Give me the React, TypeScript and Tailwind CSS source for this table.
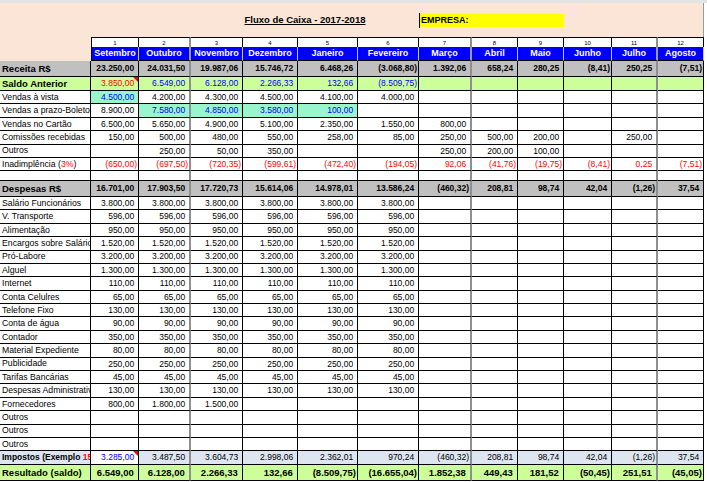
import type { ReactNode } from 'react';

const GRID =
  'grid grid-cols-[91px_48px_52px_52px_55px_60px_61px_53px_46px_46px_48px_46px_46px] w-[704px]';

const MONTHS = [
  'Setembro', 'Outubro', 'Novembro', 'Dezembro', 'Janeiro', 'Fevereiro',
  'Março', 'Abril', 'Maio', 'Junho', 'Julho', 'Agosto',
];

// gray double lines after Outubro, Março and Julho
const vline = (i: number) =>
  i === 1 || i === 6 || i === 10 ? 'border-r-2 border-r-[#8f8f8f]' : 'border-r border-r-black';

type Kind = 'receita' | 'saldo' | 'item' | 'empty' | 'despesas' | 'impostos' | 'resultado';

type Row = {
  label: ReactNode;
  kind: Kind;
  vals: string[];
  mint?: number[];
  red?: boolean;
  note?: number;
};

const six = (v: string) => [v, v, v, v, v, v];

const rows: Row[] = [
  {
    label: 'Receita R$',
    kind: 'receita',
    vals: ['23.250,00', '24.031,50', '19.987,06', '15.746,72', '6.468,26', '(3.068,80)', '1.392,06', '658,24', '280,25', '(8,41)', '250,25', '(7,51)'],
  },
  {
    label: 'Saldo Anterior',
    kind: 'saldo',
    vals: ['3.850,00', '6.549,00', '6.128,00', '2.266,33', '132,66', '(8.509,75)'],
    note: 0,
  },
  { label: 'Vendas à vista', kind: 'item', vals: ['4.500,00', '4.200,00', '4.300,00', '4.500,00', '4.100,00', '4.000,00'], mint: [0] },
  { label: 'Vendas a prazo-Boleto', kind: 'item', vals: ['8.900,00', '7.580,00', '4.850,00', '3.580,00', '100,00'], mint: [1, 2, 3, 4] },
  { label: 'Vendas no Cartão', kind: 'item', vals: ['6.500,00', '5.650,00', '4.900,00', '5.100,00', '2.350,00', '1.550,00', '800,00'] },
  { label: 'Comissões recebidas', kind: 'item', vals: ['150,00', '500,00', '480,00', '550,00', '258,00', '85,00', '250,00', '500,00', '200,00', '', '250,00'] },
  { label: 'Outros', kind: 'item', vals: ['', '250,00', '50,00', '350,00', '', '', '250,00', '200,00', '100,00'] },
  {
    label: (
      <span>
        Inadimplência (<span className="text-[#ff0000]">3%</span>)
      </span>
    ),
    kind: 'item',
    red: true,
    vals: ['(650,00)', '(697,50)', '(720,35)', '(599,61)', '(472,40)', '(194,05)', '92,06', '(41,76)', '(19,75)', '(8,41)', '0,25', '(7,51)'],
  },
  { label: '', kind: 'empty', vals: [] },
  {
    label: 'Despesas R$',
    kind: 'despesas',
    vals: ['16.701,00', '17.903,50', '17.720,73', '15.614,06', '14.978,01', '13.586,24', '(460,32)', '208,81', '98,74', '42,04', '(1,26)', '37,54'],
  },
  { label: 'Salário Funcionários', kind: 'item', vals: six('3.800,00') },
  { label: 'V. Transporte', kind: 'item', vals: six('596,00') },
  { label: 'Alimentação', kind: 'item', vals: six('950,00') },
  { label: 'Encargos sobre Salário', kind: 'item', vals: six('1.520,00') },
  { label: 'Pró-Labore', kind: 'item', vals: six('3.200,00') },
  { label: 'Alguel', kind: 'item', vals: six('1.300,00') },
  { label: 'Internet', kind: 'item', vals: six('110,00') },
  { label: 'Conta Celulres', kind: 'item', vals: six('65,00') },
  { label: 'Telefone Fixo', kind: 'item', vals: six('130,00') },
  { label: 'Conta de água', kind: 'item', vals: six('90,00') },
  { label: 'Contador', kind: 'item', vals: six('350,00') },
  { label: 'Material Expediente', kind: 'item', vals: six('80,00') },
  { label: 'Publicidade', kind: 'item', vals: six('250,00') },
  { label: 'Tarifas Bancárias', kind: 'item', vals: six('45,00') },
  { label: 'Despesas Administrativas', kind: 'item', vals: six('130,00') },
  { label: 'Fornecedores', kind: 'item', vals: ['800,00', '1.800,00', '1.500,00'] },
  { label: 'Outros', kind: 'item', vals: [] },
  { label: 'Outros', kind: 'item', vals: [] },
  { label: 'Outros', kind: 'item', vals: [] },
  {
    label: (
      <span>
        Impostos (Exemplo <span className="text-[#ff0000]">15%)</span>
      </span>
    ),
    kind: 'impostos',
    vals: ['3.285,00', '3.487,50', '3.604,73', '2.998,06', '2.362,01', '970,24', '(460,32)', '208,81', '98,74', '42,04', '(1,26)', '37,54'],
    note: 0,
  },
  {
    label: 'Resultado (saldo)',
    kind: 'resultado',
    vals: ['6.549,00', '6.128,00', '2.266,33', '132,66', '(8.509,75)', '(16.655,04)', '1.852,38', '449,43', '181,52', '(50,45)', '251,51', '(45,05)'],
  },
];

const rowStyle: Record<Kind, string> = {
  receita: 'h-[16px] bg-[#c0c0c0] font-bold',
  saldo: 'h-[14px] bg-[#ccff99]',
  item: 'h-[13.4px] bg-white',
  empty: 'h-[9.6px] bg-white',
  despesas: 'h-[16px] bg-[#c0c0c0] font-bold',
  impostos: 'h-[13.4px] bg-[#dde6f0]',
  resultado: 'h-[16.6px] bg-[#ccff99] font-bold',
};

const labelStyle: Record<Kind, string> = {
  receita: 'text-[9.5px]',
  saldo: 'text-[9.5px] font-bold',
  item: 'text-[8.7px]',
  empty: 'text-[8.7px]',
  despesas: 'text-[9.5px]',
  impostos: 'text-[8.5px] font-bold',
  resultado: 'text-[9.5px]',
};

function Num({ v }: { v: string }) {
  if (!v) return null;
  const neg = v.startsWith('(');
  return (
    <>
      {v}
      {!neg && <span className="invisible">)</span>}
    </>
  );
}

function Note() {
  return (
    <span className="absolute right-0 top-0 h-0 w-0 border-l-[5px] border-t-[5px] border-l-transparent border-t-[#ff0000]" />
  );
}

function valueClass(r: Row, ci: number) {
  if (r.mint?.includes(ci)) return 'bg-[#99f5cc] text-[#0000ff]';
  if (r.kind === 'saldo') return ci === 0 ? 'text-[#ff0000]' : 'text-[#0000ff]';
  if (r.kind === 'impostos' && ci === 0) return 'bg-white text-[#0000ff]';
  if (r.red) return 'text-[#ff0000]';
  return 'text-black';
}

export default function App() {
  return (
    <div className="h-[482px] w-[707px] overflow-hidden bg-white font-['Liberation_Sans',Arial,sans-serif] leading-none text-black">
      <div className="h-[3px] w-[707px] bg-[#e3e3e3]" />

      <div className={`${GRID} h-[34px] items-center border-r border-r-[#9a9a9a] bg-[#fbe5d6]`}>
        <div className="col-start-4 col-end-8 text-center text-[9.5px] font-bold underline">
          Fluxo de Caixa - 2017-2018
        </div>
        <div className="col-start-8 col-end-11 relative flex h-[13px] items-center bg-[#ffff00] pl-[2px] text-[9px] font-bold">
          <span className="absolute -top-[1px] -bottom-[1px] left-0 w-px bg-black" />
          EMPRESA:
        </div>
      </div>

      <div className={`${GRID} h-[10px]`}>
        <div className="bg-[#fbe5d6]" />
        {MONTHS.map((m, i) => (
          <div
            key={m}
            className={`flex items-center justify-center border-t border-t-black bg-white text-[6px] ${vline(i)} ${i === 0 ? 'border-l border-l-black' : ''}`}
          >
            {i + 1}
          </div>
        ))}
      </div>

      <div className={`${GRID} h-[14px]`}>
        <div className="bg-[#fbe5d6]" />
        {MONTHS.map((m, i) => (
          <div
            key={m}
            className={`flex items-center justify-center border-b border-b-black bg-[#0000ff] text-[9px] font-bold text-white ${
              i === 1 || i === 6 || i === 10 ? 'border-r-2 border-r-[#9a9a9a]' : 'border-r border-r-[#c8c8ff]'
            } ${i === 0 ? 'border-l border-l-black' : ''}`}
          >
            {m}
          </div>
        ))}
      </div>

      {rows.map((r, ri) => (
        <div key={ri} className={`${GRID} ${rowStyle[r.kind]}`}>
          <div
            className={`flex items-center overflow-hidden whitespace-nowrap border-b border-r border-b-black border-r-black pl-[2px] ${labelStyle[r.kind]}`}
          >
            {r.label}
          </div>
          {MONTHS.map((m, ci) => (
            <div
              key={m}
              className={`relative flex items-center justify-end overflow-hidden whitespace-nowrap border-b border-b-black pr-[1px] ${
                r.kind === 'resultado' ? 'text-[9.5px]' : 'text-[8.5px]'
              } ${vline(ci)} ${valueClass(r, ci)}`}
            >
              <Num v={r.vals[ci] ?? ''} />
              {r.note === ci && <Note />}
            </div>
          ))}
        </div>
      ))}
    </div>
  );
}
